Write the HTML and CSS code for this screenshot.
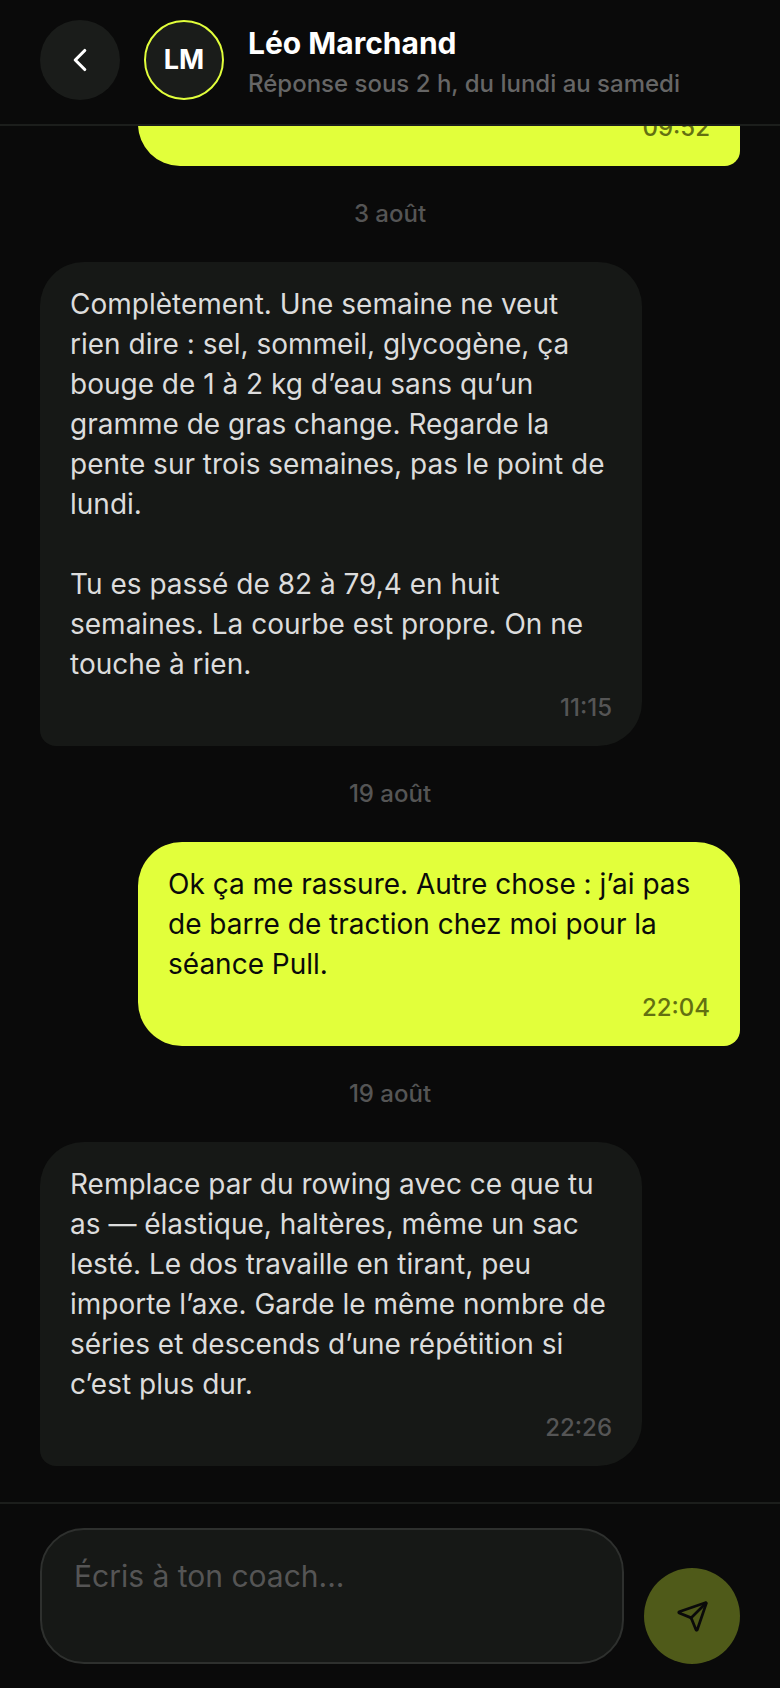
FILE: index.html
```html
<!DOCTYPE html>
<html lang="fr">
<head>
<meta charset="utf-8">
<title>Léo Marchand</title>
<link rel="stylesheet" href="styles.css">
</head>
<body>
<div class="app">
  <header class="header">
    <button class="back" aria-label="Retour">
      <svg width="38" height="38" viewBox="0 0 24 24" fill="none" stroke="#fff" stroke-width="2" stroke-linecap="round" stroke-linejoin="round"><path d="m15 18-6-6 6-6"/></svg>
    </button>
    <div class="avatar">LM</div>
    <div class="who">
      <div class="name">Léo Marchand</div>
      <div class="status">Réponse sous 2 h, du lundi au samedi</div>
    </div>
  </header>
  <main class="thread">
    <div class="bubble me"><div class="time">09:52</div></div>
    <div class="date">3 août</div>
    <div class="bubble coach">
      <p>Complètement. Une semaine ne veut rien dire : sel, sommeil, glycogène, ça bouge de 1 à 2 kg d’eau sans qu’un gramme de gras change. Regarde la pente sur trois semaines, pas le point de lundi.

Tu es passé de 82 à 79,4 en huit semaines. La courbe est propre. On ne touche à rien.</p>
      <div class="time">11:15</div>
    </div>
    <div class="date">19 août</div>
    <div class="bubble me">
      <p>Ok ça me rassure. Autre chose : j’ai pas de barre de traction chez moi pour la séance Pull.</p>
      <div class="time">22:04</div>
    </div>
    <div class="date">19 août</div>
    <div class="bubble coach">
      <p>Remplace par du rowing avec ce que tu as — élastique, haltères, même un sac lesté. Le dos travaille en tirant, peu importe l’axe. Garde le même nombre de séries et descends d’une répétition si c’est plus dur.</p>
      <div class="time">22:26</div>
    </div>
  </main>
  <footer class="composer">
    <div class="field">Écris à ton coach...</div>
    <button class="send" aria-label="Envoyer">
      <svg width="33" height="33" viewBox="0 0 24 24" fill="none" stroke="#0a0a0a" stroke-width="2" stroke-linecap="round" stroke-linejoin="round"><path d="M14.536 21.686a.5.5 0 0 0 .937-.024l6.5-19a.496.496 0 0 0-.635-.635l-19 6.5a.5.5 0 0 0-.024.937l7.93 3.18a2 2 0 0 1 1.112 1.11z"/><path d="m21.854 2.147-10.94 10.939"/></svg>
    </button>
  </footer>
</div>
</body>
</html>
```
FILE: styles.css
```css
* { box-sizing: border-box; }
html, body { margin: 0; height: 100%; }
body {
  background: #0a0a0a;
  font-family: Inter, "Liberation Sans", sans-serif;
  overflow: hidden;
}
.app {
  width: 780px;
  height: 1688px;
  display: flex;
  flex-direction: column;
}
.header {
  flex: none;
  height: 126px;
  padding: 20px 40px 0;
  display: flex;
  align-items: flex-start;
  gap: 24px;
  border-bottom: 2px solid #1c1e1c;
  background: #0a0a0a;
}
.back {
  width: 80px;
  height: 80px;
  border: 0;
  border-radius: 50%;
  padding: 0;
  background: #1a1c1a;
  display: flex;
  align-items: center;
  justify-content: center;
}
.avatar {
  width: 80px;
  height: 80px;
  padding-bottom: 2px;
  border-radius: 50%;
  border: 2px solid #e2ff3b;
  background: #1a1c1a;
  color: #fff;
  font-weight: 700;
  font-size: 27px;
  display: flex;
  align-items: center;
  justify-content: center;
}
.who { display: flex; flex-direction: column; gap: 2px; }
.name { color: #fff; font-size: 30px; font-weight: 700; line-height: 42px; margin-top: 2px; }
.status { color: #666; font-size: 24px; font-weight: 500; line-height: 36px; }
.thread {
  flex: 1;
  min-height: 0;
  overflow: hidden;
  display: flex;
  flex-direction: column;
  justify-content: flex-end;
  padding: 0 40px 36px;
}
.bubble {
  flex: none;
  width: 602px;
  padding: 22px 30px 20px;
}
.bubble p {
  margin: 0;
  font-size: 28px;
  line-height: 40px;
  white-space: pre-line;
}
.me {
  align-self: flex-end;
  background: #e2ff3b;
  color: #0a0a0a;
  border-radius: 44px 44px 16px 44px;
}
.coach {
  align-self: flex-start;
  background: #161816;
  color: #dcdcdc;
  border-radius: 44px 44px 44px 16px;
}
.time {
  margin-top: 6px;
  font-size: 24px;
  font-weight: 500;
  line-height: 36px;
  text-align: right;
}
.me .time { color: #637011; }
.coach .time { color: #555; }
.date {
  flex: none;
  text-align: center;
  color: #555;
  font-size: 24px;
  font-weight: 500;
  line-height: 36px;
  margin: 30px 0;
}
.composer {
  flex: none;
  display: flex;
  align-items: flex-end;
  gap: 20px;
  padding: 24px 40px;
  border-top: 2px solid #1c1e1c;
}
.field {
  flex: 1;
  height: 136px;
  border: 2px solid #2e302e;
  border-radius: 44px;
  background: #161816;
  color: #555;
  font-size: 30px;
  line-height: 44px;
  padding: 24px 32px;
}
.send {
  flex: none;
  width: 96px;
  height: 96px;
  border: 0;
  padding: 0;
  border-radius: 50%;
  background: #4f5a19;
  display: flex;
  align-items: center;
  justify-content: center;
}
```
